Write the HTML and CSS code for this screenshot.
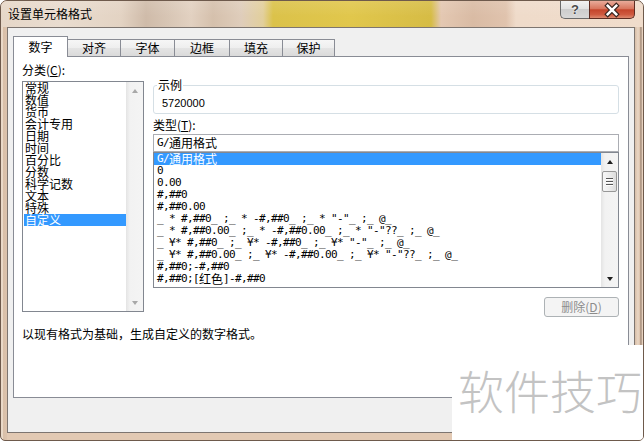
FILE: index.html
```html
<!DOCTYPE html>
<html lang="zh-CN">
<head>
<meta charset="utf-8">
<title>设置单元格格式</title>
<link rel="stylesheet" href="styles.css">
</head>
<body>
<div class="window">
  <div class="titlebar">
    <span class="title">设置单元格格式</span>
    <div class="caption-buttons">
      <div class="cap-btn help">?</div>
      <div class="cap-btn close">
        <svg width="46" height="18" viewBox="0 0 46 18">
          <path d="M18.5 4.5 L27.5 13.5 M27.5 4.5 L18.5 13.5" stroke="#3b2620" stroke-width="5" stroke-linecap="square" fill="none"/>
          <path d="M18.5 4.5 L27.5 13.5 M27.5 4.5 L18.5 13.5" stroke="#ffffff" stroke-width="2.6" stroke-linecap="square" fill="none"/>
        </svg>
      </div>
    </div>
  </div>
  <div class="client">
    <div class="tabs">
      <div class="tab active">数字</div>
      <div class="tab w53">对齐</div>
      <div class="tab w54">字体</div>
      <div class="tab w55">边框</div>
      <div class="tab w53">填充</div>
      <div class="tab w52">保护</div>
    </div>
    <div class="panel">
      <div class="columns">
        <div class="left-col">
          <div class="label">分类(<u>C</u>):</div>
          <div class="listbox category">
            <ul class="items">
              <li>常规</li>
              <li>数值</li>
              <li>货币</li>
              <li>会计专用</li>
              <li>日期</li>
              <li>时间</li>
              <li>百分比</li>
              <li>分数</li>
              <li>科学记数</li>
              <li>文本</li>
              <li>特殊</li>
              <li class="selected">自定义</li>
            </ul>
            <div class="vscroll disabled">
              <span class="sbtn"><span class="arrow up"></span></span>
              <span class="track"></span>
              <span class="sbtn"><span class="arrow down"></span></span>
            </div>
          </div>
        </div>
        <div class="right-col">
          <fieldset class="sample">
            <legend>示例</legend>
            <div class="sample-value">5720000</div>
          </fieldset>
          <div class="label type-label">类型(<u>T</u>):</div>
          <div class="type-input mono">G/<span class="cjk">通用格式</span></div>
          <div class="listbox types">
            <ul class="items mono">
              <li class="selected">G/<span class="cjk">通用格式</span></li>
              <li>0</li>
              <li>0.00</li>
              <li>#,##0</li>
              <li>#,##0.00</li>
              <li>_ * #,##0_ ;_ * -#,##0_ ;_ * "-"_ ;_ @_ </li>
              <li>_ * #,##0.00_ ;_ * -#,##0.00_ ;_ * "-"??_ ;_ @_ </li>
              <li>_ ¥* #,##0_ ;_ ¥* -#,##0_ ;_ ¥* "-"_ ;_ @_ </li>
              <li>_ ¥* #,##0.00_ ;_ ¥* -#,##0.00_ ;_ ¥* "-"??_ ;_ @_ </li>
              <li>#,##0;-#,##0</li>
              <li>#,##0;[<span class="cjk">红色</span>]-#,##0</li>
            </ul>
            <div class="vscroll">
              <span class="sbtn"><span class="arrow up"></span></span>
              <span class="thumb"><i></i><i></i><i></i></span>
              <span class="track"></span>
              <span class="sbtn"><span class="arrow down"></span></span>
            </div>
          </div>
          <div class="btn-row">
            <button class="btn" disabled>删除(<u>D</u>)</button>
          </div>
        </div>
      </div>
      <p class="desc">以现有格式为基础，生成自定义的数字格式。</p>
    </div>
  </div>
  <div class="watermark">软件技巧</div>
</div>
</body>
</html>
```

FILE: styles.css
```css
* { box-sizing: border-box; }

html, body {
  margin: 0;
  padding: 0;
}

body {
  width: 644px;
  height: 441px;
  overflow: hidden;
  background: #ffffff;
  font-family: "Noto Sans CJK SC", "Liberation Sans", sans-serif;
  font-size: 12px;
  color: #000;
}

.window {
  position: relative;
  width: 644px;
  height: 441px;
  display: flex;
  flex-direction: column;
  border: 1px solid #6e5a4c;
  border-radius: 7px 7px 5px 5px;
  background:
    linear-gradient(to right, #ead9c8 0, #ead9c8 2px, #d9bfa8 2px, #dcc3ad 6px) left top / 6px 100% no-repeat,
    linear-gradient(to right, #d8bea7 0, #e9d6c4 3px, #dcc1aa 5px, #8a7464 6px, #e8d2bf 7px) right top / 8px 100% no-repeat,
    #e2c9b3;
  overflow: hidden;
}

/* ---------- title bar ---------- */
.titlebar {
  height: 26px;
  flex: none;
  display: flex;
  align-items: flex-start;
  background:
    linear-gradient(to bottom, rgba(255,255,255,0.10), rgba(255,255,255,0) 60%),
    linear-gradient(to right,
      #e6d7c8 0px, #e9dccf 60px, #e3d3c3 120px, #cfbba9 145px, #d8c6b5 168px,
      #e2d1c1 190px, #d5c0ac 212px, #dfcdbb 240px, #e2cf9c 262px, #dbc24a 272px,
      #e1c74c 350px, #d6bc45 430px, #e4c8b2 440px, #d9bba4 472px, #e0c3ad 505px,
      #efdbca 515px, #f0dccb 644px);
}

.title {
  padding: 5px 0 0 7px;
  line-height: 16px;
  font-size: 12px;
  color: #000;
}

.caption-buttons {
  margin-left: auto;
  margin-right: 8px;
  display: flex;
}

.cap-btn {
  height: 18px;
  display: flex;
  align-items: center;
  justify-content: center;
}

.help {
  width: 29px;
  border: 1px solid #6a6a6a;
  border-top: none;
  border-right: none;
  border-radius: 0 0 0 5px;
  background: linear-gradient(to bottom, #f2f2f2 0%, #e2e2e2 45%, #cdcdcd 50%, #d8d8d8 100%);
  font-family: "Liberation Sans", sans-serif;
  font-weight: bold;
  font-size: 13px;
  color: #4a4a4a;
  text-shadow: 0 0 1px #fff, 0 0 2px #fff;
}

.close {
  width: 46px;
  border: 1px solid #5e2c22;
  border-top: none;
  border-radius: 0 0 5px 0;
  background: linear-gradient(to bottom, #e9ab9a 0%, #d8765e 45%, #c4452c 52%, #cf5a40 80%, #dd8a70 100%);
}

.close svg { display: block; }

/* ---------- client area ---------- */
.client {
  flex: 1;
  margin: 0 8px 7px 6px;
  border: 1px solid #7d7570;
  background: #f0f0f0;
  padding: 8px 5px 0 5px;
}

.tabs {
  display: flex;
  height: 20px;
  align-items: flex-end;
  position: relative;
  z-index: 1;
}

.tab {
  height: 17px;
  line-height: 16px;
  text-align: center;
  font-size: 12px;
  border-top: 1px solid #898c95;
  border-right: 1px solid #898c95;
  background: linear-gradient(to bottom, #f6f6f6 0%, #eeeeee 50%, #e4e4e4 51%, #dadada 100%);
}

.tab.active {
  width: 55px;
  height: 21px;
  margin-bottom: -1px;
  line-height: 20px;
  border: 1px solid #898c95;
  border-bottom: none;
  background: #ffffff;
}

.w52 { width: 52px; }
.w53 { width: 53px; }
.w54 { width: 54px; }
.w55 { width: 55px; }

.panel {
  height: 342px;
  border: 1px solid #898c95;
  background: #ffffff;
  padding: 7px 8px 0 8px;
}

.columns {
  display: flex;
  gap: 9px;
}

.left-col { width: 122px; flex: none; }
.right-col { width: 466px; flex: none; display: flex; flex-direction: column; }

.label {
  height: 12px;
  line-height: 12px;
  font-size: 12px;
  white-space: nowrap;
}

.left-col .label { margin-bottom: 5px; }

u { text-decoration: underline; text-underline-offset: 1px; }

/* list boxes */
.listbox {
  display: flex;
  border: 1px solid #828790;
  background: #fff;
}

.listbox .items {
  list-style: none;
  margin: 0;
  flex: 1;
  overflow: hidden;
}

.category {
  height: 231px;
}

.category .items {
  padding: 0 0 0 1px;
}

.category li {
  height: 12px;
  line-height: 12px;
  font-size: 12px;
  padding-left: 1px;
  white-space: nowrap;
}

.items li.selected {
  background: #3399ff;
  color: #ffffff;
}

.vscroll {
  width: 17px;
  flex: none;
  display: flex;
  flex-direction: column;
  background: linear-gradient(to right, #e4e4e4 0, #f2f2f2 4px, #f4f4f4 100%);
}

.sbtn {
  height: 17px;
  flex: none;
  display: flex;
  align-items: center;
  justify-content: center;
}

.track { flex: 1; }

.arrow {
  width: 0;
  height: 0;
  border-left: 3.5px solid transparent;
  border-right: 3.5px solid transparent;
}

.arrow.up { border-bottom: 4px solid #1e1e1e; }
.arrow.down { border-top: 4px solid #1e1e1e; }

.vscroll.disabled .arrow.up { border-bottom-color: #a8a8a8; }
.vscroll.disabled .arrow.down { border-top-color: #a8a8a8; }

.thumb {
  height: 21px;
  margin: 1px 0 0 1px;
  width: 15px;
  flex: none;
  border: 1px solid #979797;
  border-radius: 2px;
  background: linear-gradient(to right, #f7f7f7 0%, #ececec 50%, #dcdcdc 100%);
  display: flex;
  flex-direction: column;
  align-items: center;
  justify-content: center;
  gap: 2px;
}

.thumb i {
  display: block;
  width: 7px;
  height: 1px;
  background: #555;
  box-shadow: 0 1px 0 #fff;
}

/* sample group */
.sample {
  margin: 15px 0 0 0;
  padding: 6px 8px 4px 8px;
  border: 1px solid #d5dfe5;
  border-radius: 3px;
  min-width: 0;
}

.sample legend {
  margin-left: -5px;
  padding: 0 1px;
  font-size: 12px;
  line-height: 12px;
}

.sample-value {
  font-family: "Liberation Sans", sans-serif;
  font-size: 11px;
  line-height: 12px;
}

.type-label { margin-top: 5px; }

.mono {
  font-family: "DejaVu Sans Mono", "Liberation Mono", monospace;
  font-size: 11px;
  letter-spacing: -0.62px;
}

.cjk {
  font-family: "Noto Sans CJK SC", sans-serif;
  font-size: 12px;
  letter-spacing: 0;
}

.type-input {
  margin-top: 3px;
  height: 18px;
  border: 1px solid #abadb3;
  background: #fff;
  padding-left: 3px;
  line-height: 15px;
  white-space: pre;
}

.types {
  height: 136px;
}

.types .items {
  padding: 0;
}

.types li {
  height: 12px;
  line-height: 12px;
  padding-left: 3px;
  white-space: pre;
  overflow: hidden;
}

.types li .cjk { line-height: 12px; vertical-align: top; }
.type-input .cjk { vertical-align: top; line-height: 16px; }

.btn-row {
  margin-top: 9px;
  display: flex;
  justify-content: flex-end;
}

.btn {
  width: 75px;
  height: 20px;
  padding: 0;
  border: 1px solid #adb2b5;
  border-radius: 3px;
  background: #f4f4f4;
  color: #8c8c8c;
  font-family: "Noto Sans CJK SC", sans-serif;
  font-size: 12px;
  line-height: 16px;
}

.desc {
  margin: 11px 0 0 0;
  font-size: 12px;
  line-height: 12px;
}

/* watermark overlay */
.watermark {
  position: absolute;
  left: 451px;
  top: 344px;
  width: 200px;
  height: 100px;
  background: #ffffff;
  padding: 21px 0 0 6px;
  font-family: "Noto Sans CJK SC", sans-serif;
  font-weight: 300;
  font-size: 46px;
  line-height: 46px;
  color: #c3c3c3;
  white-space: nowrap;
}
```
